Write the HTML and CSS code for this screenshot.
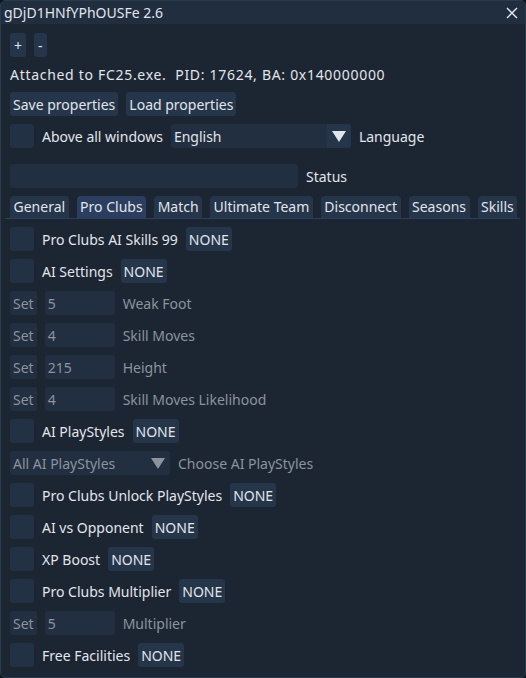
FILE: index.html
```html
<!DOCTYPE html>
<html lang="en">
<head>
    <meta charset="UTF-8">
    <title>gDjD1HNfYPhOUSFe 2.6</title>
    <link rel="stylesheet" href="styles.css">
</head>
<body>
    <div class="window">
        <div class="title-bar">
            <span class="title">gDjD1HNfYPhOUSFe 2.6</span>
            <svg class="close" width="12" height="12" viewBox="0 0 12 12">
                <path d="M1 1 L11 11 M11 1 L1 11" stroke="#e6e9ee" stroke-width="1.4"/>
            </svg>
        </div>
        <div class="content">
            <div class="row">
                <button class="btn small">+</button>
                <button class="btn small">-</button>
            </div>
            <div class="text-row">Attached to FC25.exe.&nbsp; PID: 17624, BA: 0x140000000</div>
            <div class="row">
                <button class="btn">Save properties</button>
                <button class="btn">Load properties</button>
            </div>
            <div class="row">
                <span class="check"></span>
                <span class="label">Above all windows</span>
                <div class="combo lang"><span class="combo-value">English</span><span class="combo-arrow"><i class="tri"></i></span></div>
                <span class="label">Language</span>
            </div>
            <div class="row spaced">
                <div class="input status"></div>
                <span class="label">Status</span>
            </div>
            <div class="tabs">
                <span class="tab">General</span>
                <span class="tab active">Pro Clubs</span>
                <span class="tab">Match</span>
                <span class="tab">Ultimate Team</span>
                <span class="tab">Disconnect</span>
                <span class="tab">Seasons</span>
                <span class="tab">Skills</span>
            </div>
            <div class="row">
                <span class="check"></span>
                <span class="label">Pro Clubs AI Skills 99</span>
                <button class="btn">NONE</button>
            </div>
            <div class="row">
                <span class="check"></span>
                <span class="label">AI Settings</span>
                <button class="btn">NONE</button>
            </div>
            <div class="row">
                <button class="btn dim">Set</button>
                <div class="input num dim">5</div>
                <span class="label dim">Weak Foot</span>
            </div>
            <div class="row">
                <button class="btn dim">Set</button>
                <div class="input num dim">4</div>
                <span class="label dim">Skill Moves</span>
            </div>
            <div class="row">
                <button class="btn dim">Set</button>
                <div class="input num dim">215</div>
                <span class="label dim">Height</span>
            </div>
            <div class="row">
                <button class="btn dim">Set</button>
                <div class="input num dim">4</div>
                <span class="label dim">Skill Moves Likelihood</span>
            </div>
            <div class="row">
                <span class="check"></span>
                <span class="label">AI PlayStyles</span>
                <button class="btn">NONE</button>
            </div>
            <div class="row">
                <div class="combo styles dim"><span class="combo-value">All AI PlayStyles</span><span class="combo-arrow"><i class="tri"></i></span></div>
                <span class="label dim">Choose AI PlayStyles</span>
            </div>
            <div class="row">
                <span class="check"></span>
                <span class="label">Pro Clubs Unlock PlayStyles</span>
                <button class="btn">NONE</button>
            </div>
            <div class="row">
                <span class="check"></span>
                <span class="label">AI vs Opponent</span>
                <button class="btn">NONE</button>
            </div>
            <div class="row">
                <span class="check"></span>
                <span class="label">XP Boost</span>
                <button class="btn">NONE</button>
            </div>
            <div class="row">
                <span class="check"></span>
                <span class="label">Pro Clubs Multiplier</span>
                <button class="btn">NONE</button>
            </div>
            <div class="row">
                <button class="btn dim">Set</button>
                <div class="input num dim">5</div>
                <span class="label dim">Multiplier</span>
            </div>
            <div class="row">
                <span class="check"></span>
                <span class="label">Free Facilities</span>
                <button class="btn">NONE</button>
            </div>
        </div>
    </div>
</body>
</html>
```

FILE: styles.css
```css
body {
    margin: 0;
    padding: 0;
    background: #0f151c;
    font-family: "Noto Sans", "Open Sans", sans-serif;
    font-size: 14px;
    color: #e2e5ea;
}

.window {
    width: 526px;
    height: 678px;
    box-sizing: border-box;
    background-color: #1c2633;
    border: 1px solid #2c3b4c;
    border-radius: 5px;
    overflow: hidden;
}

.title-bar {
    height: 23px;
    background-color: #202e40;
    display: flex;
    align-items: center;
    justify-content: space-between;
    padding: 0 7px 0 3px;
}

.title {
    line-height: 23px;
}

.content {
    display: flex;
    flex-direction: column;
    gap: 8px;
    padding: 9px 9px 0 9px;
}

.row {
    display: flex;
    align-items: center;
    gap: 8px;
    height: 24px;
}

.row.spaced {
    margin-top: 8px;
}

.text-row {
    height: 19px;
    line-height: 19px;
    letter-spacing: 0.7px;
}

.btn {
    font-family: inherit;
    font-size: 14px;
    color: #e2e5ea;
    background-color: #25354a;
    border: none;
    border-radius: 3px;
    height: 24px;
    padding: 1px 3px 0 3px;
    line-height: 23px;
}

.btn.small {
    padding: 1px 4px 0 4px;
}

.check {
    width: 24px;
    height: 24px;
    border-radius: 3px;
    background-color: #233144;
}

.label {
    line-height: 24px;
    padding-top: 2px;
    white-space: nowrap;
}

.dim {
    color: #8b939d;
}

.btn.dim {
    color: #8b939d;
    background-color: #222f41;
}

.input {
    height: 24px;
    border-radius: 3px;
    background-color: #222f41;
    line-height: 24px;
    padding: 1px 3px 0 3px;
    box-sizing: border-box;
}

.input.num {
    width: 70px;
}

.input.status {
    width: 288px;
}

.combo {
    display: flex;
    height: 24px;
    border-radius: 3px;
    background-color: #222f41;
    overflow: hidden;
}

.combo.lang {
    width: 180px;
}

.combo.styles {
    width: 160px;
}

.combo-value {
    flex: 1;
    padding: 1px 3px 0 3px;
    line-height: 23px;
}

.combo-arrow {
    width: 24px;
    background-color: #25354a;
    display: flex;
    align-items: center;
    justify-content: center;
}

.combo.dim .combo-arrow {
    background-color: #222f41;
}

.tri {
    width: 0;
    height: 0;
    border-left: 7px solid transparent;
    border-right: 7px solid transparent;
    border-top: 11px solid #e2e5ea;
}

.combo.dim .tri {
    border-top-color: #8b939d;
}

.tabs {
    display: flex;
    gap: 8px;
    height: 22px;
    margin-left: -5px;
    margin-right: -4px;
    padding-left: 5px;
    border-bottom: 1px solid #2b3e60;
}

.tab {
    background-color: #25354a;
    border-radius: 4px 4px 0 0;
    padding: 0 3.5px;
    line-height: 22px;
    white-space: nowrap;
}

.tab.active {
    background-color: #2b3e60;
}
```
